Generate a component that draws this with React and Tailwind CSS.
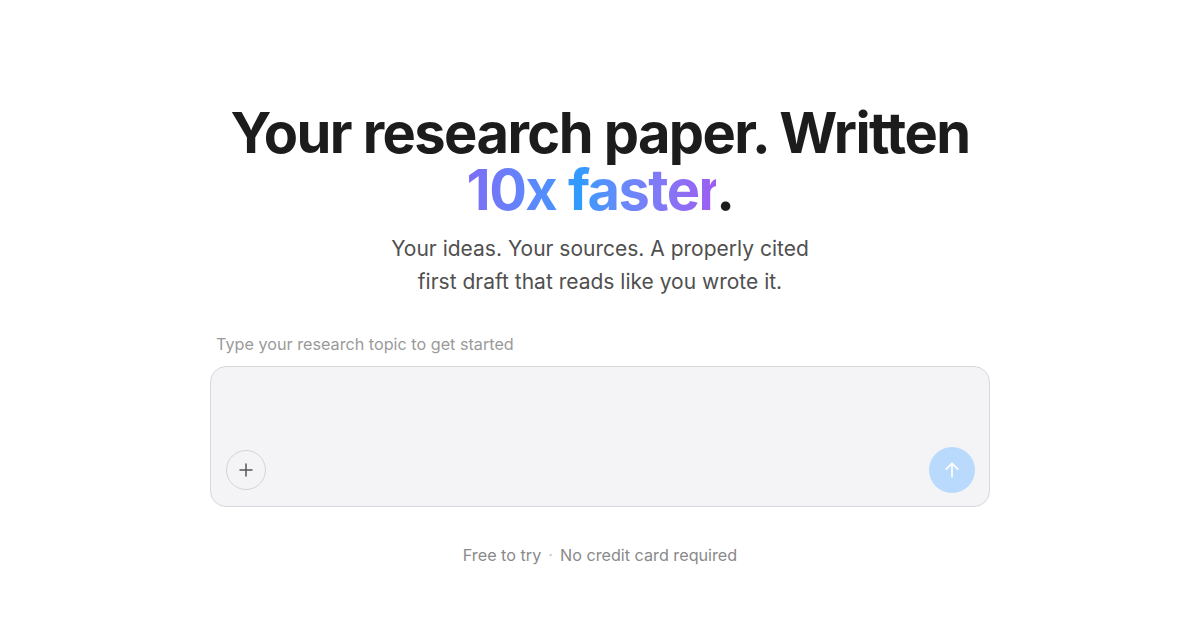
import React from "react";

export default function App() {
  return (
    <div className="w-[1200px] h-[630px] bg-white flex flex-col items-center font-['Inter',sans-serif]">
      <h1 className="mt-[105px] text-[56px] leading-[57px] font-bold tracking-[-0.028em] text-[#1c1c1c] text-center">
        Your research paper. Written
        <br />
        <span className="bg-gradient-to-r from-[#7c6cf6] via-[#2e9bff] via-45% to-[#9d5cf2] bg-clip-text text-transparent">
          10x faster
        </span>
        .
      </h1>
      <p className="mt-[13px] text-[21px] leading-[33px] text-[#505050] text-center">
        Your ideas. Your sources. A properly cited
        <br />
        first draft that reads like you wrote it.
      </p>
      <div className="mt-[34px] w-[780px]">
        <div className="pl-[6px] text-[16.2px] leading-[24px] text-[#9a9a9a]">
          Type your research topic to get started
        </div>
        <div className="mt-[10px] h-[141px] rounded-[16px] border border-[#d8d8dc] bg-[#f4f4f6] flex items-end justify-between pl-[15px] pr-[14px] pb-[16px]">
          <button className="w-[40px] h-[40px] rounded-full border border-[#d4d4d8] flex items-center justify-center text-[#555]">
            <svg width="18" height="18" viewBox="0 0 24 24" fill="none" stroke="currentColor" strokeWidth="2" strokeLinecap="round">
              <path d="M12 4v16M4 12h16" />
            </svg>
          </button>
          <button className="w-[46px] h-[46px] rounded-full bg-[#b9dafd] flex items-center justify-center text-white mb-[-3px]">
            <svg width="20" height="20" viewBox="0 0 24 24" fill="none" stroke="currentColor" strokeWidth="2" strokeLinecap="round" strokeLinejoin="round">
              <path d="M12 20V4M5 11l7-7 7 7" />
            </svg>
          </button>
        </div>
      </div>
      <div className="mt-[36px] text-[16.2px] leading-[24px] text-[#8a8a8a] flex items-center">
        <span>Free to try</span>
        <span className="mx-[7px] text-[#c4c4c4]">·</span>
        <span>No credit card required</span>
      </div>
    </div>
  );
}
